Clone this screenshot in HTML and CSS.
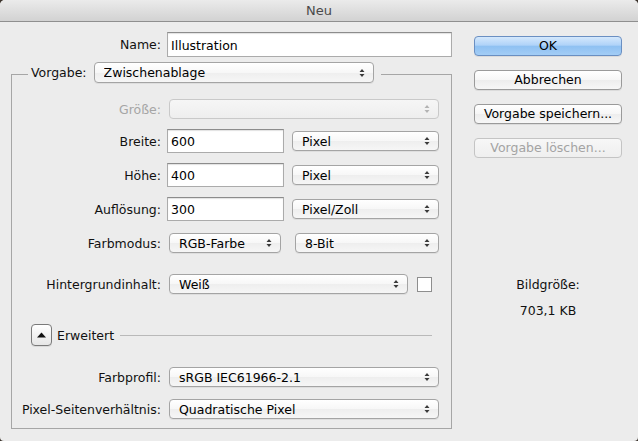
FILE: index.html
```html
<!DOCTYPE html>
<html lang="de">
<head>
<meta charset="utf-8">
<title>Neu</title>
<link rel="stylesheet" href="styles.css">
</head>
<body>
<div class="window">
  <div class="titlebar">Neu</div>
  <div class="content">
    <div class="main">
      <div class="row name-row">
        <span class="lbl">Name:</span>
        <input class="field field-name" type="text" value="Illustration">
      </div>
      <fieldset class="preset">
        <legend class="legend">
          <span class="legend-label">Vorgabe:</span>
          <div class="select select-preset"><span class="sel-text">Zwischenablage</span>
            <svg class="arrows" viewBox="0 0 6 10" width="6" height="10"><path d="M0.5 4 L3 1 L5.5 4Z M0.5 6 L3 9 L5.5 6Z"/></svg></div>
        </legend>

        <div class="row r-size">
          <span class="lbl disabled">Größe:</span>
          <div class="select select-wide is-disabled"><span class="sel-text"></span>
            <svg class="arrows" viewBox="0 0 6 10" width="6" height="10"><path d="M0.5 4 L3 1 L5.5 4Z M0.5 6 L3 9 L5.5 6Z"/></svg></div>
        </div>

        <div class="row r-width">
          <span class="lbl">Breite:</span>
          <input class="field field-num" type="text" value="600">
          <div class="select select-unit"><span class="sel-text">Pixel</span>
            <svg class="arrows" viewBox="0 0 6 10" width="6" height="10"><path d="M0.5 4 L3 1 L5.5 4Z M0.5 6 L3 9 L5.5 6Z"/></svg></div>
        </div>

        <div class="row r-gap10">
          <span class="lbl">Höhe:</span>
          <input class="field field-num" type="text" value="400">
          <div class="select select-unit"><span class="sel-text">Pixel</span>
            <svg class="arrows" viewBox="0 0 6 10" width="6" height="10"><path d="M0.5 4 L3 1 L5.5 4Z M0.5 6 L3 9 L5.5 6Z"/></svg></div>
        </div>

        <div class="row r-gap10">
          <span class="lbl">Auflösung:</span>
          <input class="field field-num" type="text" value="300">
          <div class="select select-unit"><span class="sel-text">Pixel/Zoll</span>
            <svg class="arrows" viewBox="0 0 6 10" width="6" height="10"><path d="M0.5 4 L3 1 L5.5 4Z M0.5 6 L3 9 L5.5 6Z"/></svg></div>
        </div>

        <div class="row r-gap10">
          <span class="lbl">Farbmodus:</span>
          <div class="select select-mode"><span class="sel-text">RGB-Farbe</span>
            <svg class="arrows" viewBox="0 0 6 10" width="6" height="10"><path d="M0.5 4 L3 1 L5.5 4Z M0.5 6 L3 9 L5.5 6Z"/></svg></div>
          <div class="select select-bits"><span class="sel-text">8-Bit</span>
            <svg class="arrows" viewBox="0 0 6 10" width="6" height="10"><path d="M0.5 4 L3 1 L5.5 4Z M0.5 6 L3 9 L5.5 6Z"/></svg></div>
        </div>

        <div class="row r-bg">
          <span class="lbl">Hintergrundinhalt:</span>
          <div class="select select-bgc"><span class="sel-text">Weiß</span>
            <svg class="arrows" viewBox="0 0 6 10" width="6" height="10"><path d="M0.5 4 L3 1 L5.5 4Z M0.5 6 L3 9 L5.5 6Z"/></svg></div>
          <span class="swatch"></span>
        </div>

        <div class="row r-adv">
          <span class="disclosure"><svg viewBox="0 0 9 6" width="9" height="6"><path d="M0 5.5 L4.5 0.5 L9 5.5Z"/></svg></span>
          <span class="adv-label">Erweitert</span>
          <span class="adv-line"></span>
        </div>

        <div class="row r-profile">
          <span class="lbl">Farbprofil:</span>
          <div class="select select-wide"><span class="sel-text">sRGB IEC61966-2.1</span>
            <svg class="arrows" viewBox="0 0 6 10" width="6" height="10"><path d="M0.5 4 L3 1 L5.5 4Z M0.5 6 L3 9 L5.5 6Z"/></svg></div>
        </div>

        <div class="row r-pixel">
          <span class="lbl">Pixel-Seitenverhältnis:</span>
          <div class="select select-wide"><span class="sel-text">Quadratische Pixel</span>
            <svg class="arrows" viewBox="0 0 6 10" width="6" height="10"><path d="M0.5 4 L3 1 L5.5 4Z M0.5 6 L3 9 L5.5 6Z"/></svg></div>
        </div>
      </fieldset>
    </div>

    <div class="side">
      <button class="btn btn-default" type="button">OK</button>
      <button class="btn" type="button">Abbrechen</button>
      <button class="btn" type="button">Vorgabe speichern...</button>
      <button class="btn btn-disabled" type="button" disabled>Vorgabe löschen...</button>
      <div class="info info-title">Bildgröße:</div>
      <div class="info info-value">703,1 KB</div>
    </div>
  </div>
</div>
</body>
</html>
```

FILE: styles.css
```css
* { box-sizing: border-box; }

html, body {
  margin: 0;
  padding: 0;
  background: #3b332c;
}

body {
  font-family: "DejaVu Sans", "Liberation Sans", sans-serif;
  font-size: 12.5px;
  color: #111;
}

.window {
  width: 638px;
  height: 441px;
  background: #ececec;
  border-radius: 5px 5px 4px 4px;
  overflow: hidden;
}

.titlebar {
  height: 22px;
  line-height: 21px;
  text-align: center;
  font-size: 13px;
  color: #4a4a4a;
  background: linear-gradient(#ebebeb, #d2d2d2);
  border-bottom: 1px solid #8f8f8f;
}

.content {
  display: flex;
}

.main {
  width: 452px;
  padding-top: 10px;
}

.row {
  display: flex;
  align-items: center;
  height: 24px;
  white-space: nowrap;
}

.name-row {
  height: 25px;
  padding-left: 20px;
}

.lbl {
  width: 141px;
  flex: none;
  display: flex;
  justify-content: flex-end;
  margin-right: 6px;
  color: #111;
}

.lbl.disabled { color: #a5a5a5; }

.field {
  font: inherit;
  color: #000;
  height: 24px;
  padding: 1px 3px 0;
  border: 1px solid #ababab;
  border-top-color: #8c8c8c;
  background: #fff;
  box-shadow: inset 0 1px 1px rgba(0,0,0,0.12);
  outline: none;
  margin: 0;
}

.field-name {
  width: 285px;
  height: 25px;
}

.field-num {
  width: 117px;
  margin-right: 8px;
}

.preset {
  margin: 5px 0 0 11px;
  width: 441px;
  padding: 10px 12px 7px 8px;
  border: 1px solid #a6a6a6;
  min-width: 0;
}

.legend {
  display: flex;
  align-items: center;
  margin-left: 8px;
  padding: 0 7px 4px 3px;
  height: 25px;
}

.legend-label {
  margin-right: 7px;
}

.select {
  display: flex;
  align-items: center;
  height: 20px;
  padding: 0 8px 0 9px;
  border: 1px solid #a4a4a4;
  border-radius: 4px;
  background: linear-gradient(#ffffff, #f7f7f7 50%, #eeeeee 51%, #f6f6f6);
  box-shadow: 0 1px 0 rgba(0,0,0,0.06);
  color: #000;
  flex: none;
}

.sel-text {
  flex: 1;
  overflow: hidden;
}

.arrows {
  flex: none;
  fill: #3a3a3a;
}

.select.is-disabled {
  border-color: #c9c9c9;
  background: linear-gradient(#f6f6f6, #eeeeee);
  box-shadow: none;
}

.select.is-disabled .arrows { fill: #b3b3b3; }

.select-preset { width: 280px; height: 21px; }
.row .select { margin-left: 2px; }
.field-num + .select { margin-left: 0; }
.select-wide { width: 270px; }
.select-unit { width: 147px; }
.select-mode { width: 112px; }
.row .select-bits { width: 144px; margin-left: 14px; }
.select-bgc { width: 239px; }

.swatch {
  width: 15px;
  height: 15px;
  margin-left: 9px;
  background: #fff;
  border: 1px solid #8e8e8e;
}

.r-size { margin-top: 0; }
.r-width { margin-top: 8px; }
.r-gap10 { margin-top: 10px; }
.r-bg { margin-top: 17px; }
.r-adv { margin-top: 27px; }
.r-profile { margin-top: 18px; }
.r-pixel { margin-top: 8px; }

.disclosure {
  width: 21px;
  height: 22px;
  margin-left: 11px;
  border: 1px solid #7a7a7a;
  border-radius: 4px;
  background: linear-gradient(#ffffff, #e6e6e6);
  display: flex;
  align-items: center;
  justify-content: center;
  box-shadow: 0 1px 0 rgba(0,0,0,0.08);
}

.disclosure svg { fill: #111; }

.adv-label {
  margin-left: 5px;
}

.adv-line {
  flex: 1;
  height: 1px;
  background: #b9b9b9;
  margin: 0 7px 0 6px;
}

.side {
  width: 148px;
  margin-left: 22px;
  padding-top: 14px;
  display: flex;
  flex-direction: column;
}

.btn {
  font: inherit;
  color: #000;
  height: 20px;
  padding: 0;
  margin: 0 0 14px 0;
  border: 1px solid #9a9a9a;
  border-radius: 4px;
  background: linear-gradient(#ffffff, #f6f6f6 50%, #ededed 51%, #f7f7f7);
  box-shadow: 0 1px 0 rgba(0,0,0,0.07);
  line-height: 18px;
}

.btn-default {
  border-color: #6a8fc2;
  background: linear-gradient(#d4e8fc 0%, #b0d3f8 45%, #8fc1f2 52%, #a3cdf6 100%);
}

.btn-disabled {
  color: #a3a3a3;
  border-color: #c4c4c4;
  background: linear-gradient(#f7f7f7, #efefef);
  box-shadow: none;
}

.info {
  text-align: center;
  line-height: 16px;
  color: #111;
}

.info-title { margin-top: 105px; }
.info-value { margin-top: 10px; }
```
